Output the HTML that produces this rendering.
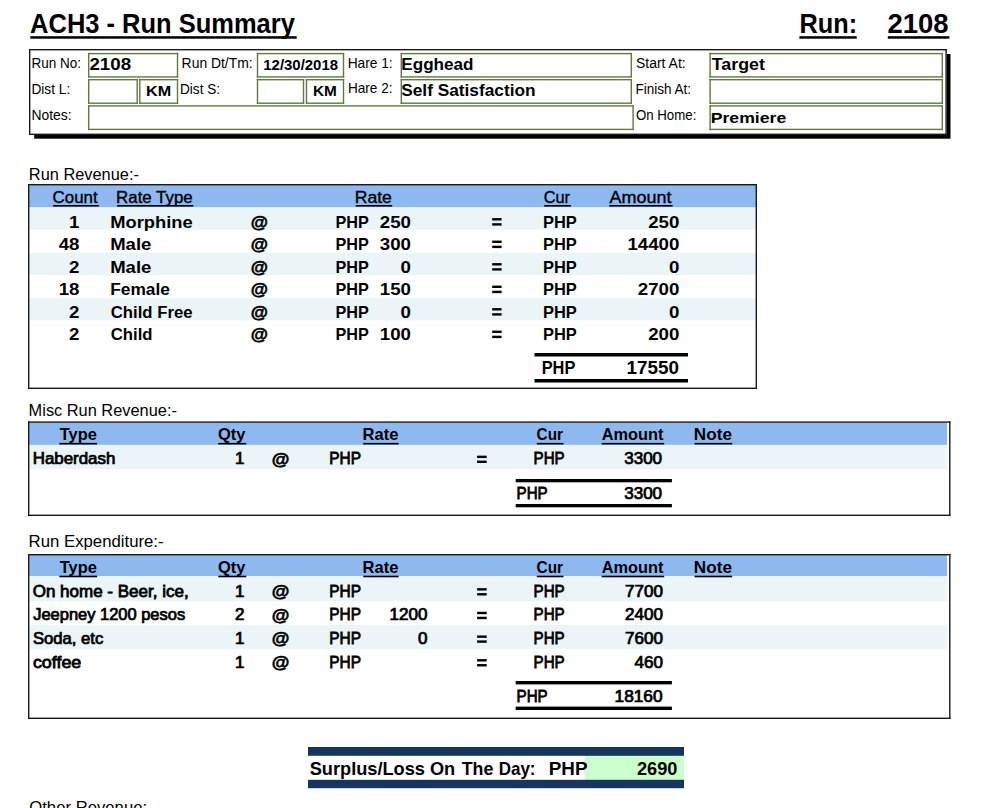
<!DOCTYPE html>
<html><head><meta charset="utf-8"><style>
html,body{margin:0;padding:0;background:#fff;}
svg{display:block;}
text{font-family:"Liberation Sans",sans-serif;white-space:pre;}
</style></head><body>
<svg width="994" height="808" viewBox="0 0 994 808">
<rect x="0" y="0" width="994" height="808" fill="#fff"/>
<rect x="30.3" y="36.2" width="266.4" height="2.5" fill="#000"/>
<rect x="799.4" y="36.2" width="57.3" height="2.5" fill="#000"/>
<rect x="887.8" y="36.2" width="61.6" height="2.5" fill="#000"/>
<rect x="34.2" y="54" width="916.3" height="84.7" fill="#000"/>
<rect x="29" y="49" width="917.8" height="86" fill="#fff"/>
<rect x="29" y="49" width="917.8" height="1.4" fill="#1a1a1a"/>
<rect x="29" y="133.6" width="917.8" height="1.4" fill="#1a1a1a"/>
<rect x="29" y="49" width="1.4" height="86" fill="#1a1a1a"/>
<rect x="945.4" y="49" width="1.4" height="86" fill="#1a1a1a"/>
<rect x="88" y="52.9" width="90.19999999999999" height="1.4" fill="#62793f"/>
<rect x="88" y="76.19999999999999" width="90.19999999999999" height="1.4" fill="#62793f"/>
<rect x="88" y="52.9" width="1.4" height="24.699999999999996" fill="#62793f"/>
<rect x="176.79999999999998" y="52.9" width="1.4" height="24.699999999999996" fill="#62793f"/>
<rect x="88" y="79" width="49.900000000000006" height="1.4" fill="#62793f"/>
<rect x="88" y="102.5" width="49.900000000000006" height="1.4" fill="#62793f"/>
<rect x="88" y="79" width="1.4" height="24.900000000000006" fill="#62793f"/>
<rect x="136.5" y="79" width="1.4" height="24.900000000000006" fill="#62793f"/>
<rect x="139.1" y="79" width="39.099999999999994" height="1.4" fill="#62793f"/>
<rect x="139.1" y="102.5" width="39.099999999999994" height="1.4" fill="#62793f"/>
<rect x="139.1" y="79" width="1.4" height="24.900000000000006" fill="#62793f"/>
<rect x="176.79999999999998" y="79" width="1.4" height="24.900000000000006" fill="#62793f"/>
<rect x="88" y="105.2" width="545.8" height="1.4" fill="#62793f"/>
<rect x="88" y="128.7" width="545.8" height="1.4" fill="#62793f"/>
<rect x="88" y="105.2" width="1.4" height="24.89999999999999" fill="#62793f"/>
<rect x="632.4" y="105.2" width="1.4" height="24.89999999999999" fill="#62793f"/>
<rect x="256.8" y="52.9" width="87.39999999999998" height="1.4" fill="#62793f"/>
<rect x="256.8" y="76.19999999999999" width="87.39999999999998" height="1.4" fill="#62793f"/>
<rect x="256.8" y="52.9" width="1.4" height="24.699999999999996" fill="#62793f"/>
<rect x="342.8" y="52.9" width="1.4" height="24.699999999999996" fill="#62793f"/>
<rect x="256.8" y="79" width="47.39999999999998" height="1.4" fill="#62793f"/>
<rect x="256.8" y="102.5" width="47.39999999999998" height="1.4" fill="#62793f"/>
<rect x="256.8" y="79" width="1.4" height="24.900000000000006" fill="#62793f"/>
<rect x="302.8" y="79" width="1.4" height="24.900000000000006" fill="#62793f"/>
<rect x="305.8" y="79" width="38.39999999999998" height="1.4" fill="#62793f"/>
<rect x="305.8" y="102.5" width="38.39999999999998" height="1.4" fill="#62793f"/>
<rect x="305.8" y="79" width="1.4" height="24.900000000000006" fill="#62793f"/>
<rect x="342.8" y="79" width="1.4" height="24.900000000000006" fill="#62793f"/>
<rect x="400.6" y="52.9" width="231.39999999999998" height="1.4" fill="#62793f"/>
<rect x="400.6" y="76.19999999999999" width="231.39999999999998" height="1.4" fill="#62793f"/>
<rect x="400.6" y="52.9" width="1.4" height="24.699999999999996" fill="#62793f"/>
<rect x="630.6" y="52.9" width="1.4" height="24.699999999999996" fill="#62793f"/>
<rect x="400.6" y="79" width="231.39999999999998" height="1.4" fill="#62793f"/>
<rect x="400.6" y="102.5" width="231.39999999999998" height="1.4" fill="#62793f"/>
<rect x="400.6" y="79" width="1.4" height="24.900000000000006" fill="#62793f"/>
<rect x="630.6" y="79" width="1.4" height="24.900000000000006" fill="#62793f"/>
<rect x="709.4" y="52.9" width="233.60000000000002" height="1.4" fill="#62793f"/>
<rect x="709.4" y="76.19999999999999" width="233.60000000000002" height="1.4" fill="#62793f"/>
<rect x="709.4" y="52.9" width="1.4" height="24.699999999999996" fill="#62793f"/>
<rect x="941.6" y="52.9" width="1.4" height="24.699999999999996" fill="#62793f"/>
<rect x="709.4" y="79" width="233.60000000000002" height="1.4" fill="#62793f"/>
<rect x="709.4" y="102.5" width="233.60000000000002" height="1.4" fill="#62793f"/>
<rect x="709.4" y="79" width="1.4" height="24.900000000000006" fill="#62793f"/>
<rect x="941.6" y="79" width="1.4" height="24.900000000000006" fill="#62793f"/>
<rect x="709.4" y="105.2" width="233.60000000000002" height="1.4" fill="#62793f"/>
<rect x="709.4" y="128.7" width="233.60000000000002" height="1.4" fill="#62793f"/>
<rect x="709.4" y="105.2" width="1.4" height="24.89999999999999" fill="#62793f"/>
<rect x="941.6" y="105.2" width="1.4" height="24.89999999999999" fill="#62793f"/>
<rect x="29" y="185" width="727" height="22.5" fill="#8db8f0"/>
<rect x="29" y="207.3" width="727" height="22.5" fill="#ebf5f8"/>
<rect x="29" y="252.6" width="727" height="22.5" fill="#ebf5f8"/>
<rect x="29" y="297.8" width="727" height="22.5" fill="#ebf5f8"/>
<rect x="28" y="184" width="729" height="1.4" fill="#1a1a1a"/>
<rect x="28" y="387.6" width="729" height="1.4" fill="#1a1a1a"/>
<rect x="28" y="184" width="1.4" height="205" fill="#1a1a1a"/>
<rect x="755.6" y="184" width="1.4" height="205" fill="#1a1a1a"/>
<rect x="53.1" y="205" width="45.699999999999996" height="1.6" fill="#000"/>
<rect x="117.10000000000001" y="205" width="76.2" height="1.6" fill="#000"/>
<rect x="355.8" y="205" width="36.39999999999996" height="1.6" fill="#000"/>
<rect x="544.2" y="205" width="26.8" height="1.6" fill="#000"/>
<rect x="609.3000000000001" y="205" width="63.3" height="1.6" fill="#000"/>
<rect x="492.2" y="218.1" width="9.4" height="2.4" fill="#000"/>
<rect x="492.2" y="223.2" width="9.4" height="2.4" fill="#000"/>
<rect x="492.2" y="240.6" width="9.4" height="2.4" fill="#000"/>
<rect x="492.2" y="245.7" width="9.4" height="2.4" fill="#000"/>
<rect x="492.2" y="263.1" width="9.4" height="2.4" fill="#000"/>
<rect x="492.2" y="268.20000000000005" width="9.4" height="2.4" fill="#000"/>
<rect x="492.2" y="285.6" width="9.4" height="2.4" fill="#000"/>
<rect x="492.2" y="290.70000000000005" width="9.4" height="2.4" fill="#000"/>
<rect x="492.2" y="308.1" width="9.4" height="2.4" fill="#000"/>
<rect x="492.2" y="313.20000000000005" width="9.4" height="2.4" fill="#000"/>
<rect x="492.2" y="330.6" width="9.4" height="2.4" fill="#000"/>
<rect x="492.2" y="335.70000000000005" width="9.4" height="2.4" fill="#000"/>
<rect x="534.5" y="353" width="153.5" height="3.5" fill="#000"/>
<rect x="534.5" y="379" width="153.5" height="3.5" fill="#000"/>
<rect x="29" y="422.4" width="918" height="22.5" fill="#8db8f0"/>
<rect x="29" y="444.9" width="918" height="24.1" fill="#ebf5f8"/>
<rect x="28" y="421.4" width="922.5" height="1.4" fill="#1a1a1a"/>
<rect x="28" y="514.6" width="922.5" height="1.4" fill="#1a1a1a"/>
<rect x="28" y="421.4" width="1.4" height="94.60000000000002" fill="#1a1a1a"/>
<rect x="949.1" y="421.4" width="1.4" height="94.60000000000002" fill="#1a1a1a"/>
<rect x="59.400000000000006" y="442.9" width="37.7" height="1.6" fill="#000"/>
<rect x="218.2" y="442.9" width="28.0" height="1.6" fill="#000"/>
<rect x="363.3" y="442.9" width="35.39999999999998" height="1.6" fill="#000"/>
<rect x="536.8000000000001" y="442.9" width="26.699999999999932" height="1.6" fill="#000"/>
<rect x="601.7" y="442.9" width="62.5" height="1.6" fill="#000"/>
<rect x="694.6" y="442.9" width="37.60000000000002" height="1.6" fill="#000"/>
<rect x="477.1" y="455.65" width="9.6" height="2.4" fill="#000"/>
<rect x="477.1" y="460.59999999999997" width="9.6" height="2.4" fill="#000"/>
<rect x="515.7" y="479" width="156.2" height="3.3" fill="#000"/>
<rect x="515.7" y="504" width="156.2" height="3.3" fill="#000"/>
<rect x="29" y="555" width="918" height="21.299999999999955" fill="#8db8f0"/>
<rect x="29" y="576.3" width="918" height="25" fill="#ebf5f8"/>
<rect x="29" y="624.8" width="918" height="24.1" fill="#ebf5f8"/>
<rect x="28" y="554" width="922.5" height="1.4" fill="#1a1a1a"/>
<rect x="28" y="717.6" width="922.5" height="1.4" fill="#1a1a1a"/>
<rect x="28" y="554" width="1.4" height="165" fill="#1a1a1a"/>
<rect x="949.1" y="554" width="1.4" height="165" fill="#1a1a1a"/>
<rect x="59.400000000000006" y="575.6999999999999" width="37.7" height="1.6" fill="#000"/>
<rect x="218.2" y="575.6999999999999" width="28.0" height="1.6" fill="#000"/>
<rect x="363.3" y="575.6999999999999" width="35.39999999999998" height="1.6" fill="#000"/>
<rect x="536.8000000000001" y="575.6999999999999" width="26.699999999999932" height="1.6" fill="#000"/>
<rect x="601.7" y="575.6999999999999" width="62.5" height="1.6" fill="#000"/>
<rect x="694.6" y="575.6999999999999" width="37.60000000000002" height="1.6" fill="#000"/>
<rect x="477.1" y="588.1500000000001" width="9.6" height="2.4" fill="#000"/>
<rect x="477.1" y="593.1" width="9.6" height="2.4" fill="#000"/>
<rect x="477.1" y="611.8000000000001" width="9.6" height="2.4" fill="#000"/>
<rect x="477.1" y="616.75" width="9.6" height="2.4" fill="#000"/>
<rect x="477.1" y="635.45" width="9.6" height="2.4" fill="#000"/>
<rect x="477.1" y="640.4" width="9.6" height="2.4" fill="#000"/>
<rect x="477.1" y="659.1000000000001" width="9.6" height="2.4" fill="#000"/>
<rect x="477.1" y="664.0500000000001" width="9.6" height="2.4" fill="#000"/>
<rect x="515.7" y="681" width="156.2" height="3.4" fill="#000"/>
<rect x="515.7" y="706.6" width="156.2" height="3.4" fill="#000"/>
<rect x="584.6" y="755" width="99.4" height="25" fill="#ccffcc"/>
<rect x="308" y="747" width="376" height="8.8" fill="#17365d"/>
<rect x="308" y="779.8" width="376" height="8.4" fill="#17365d"/>
<text transform="translate(30.10,32.70) scale(0.9330,1)" font-size="27.31" font-weight="bold" fill="#000">ACH3 - Run Summary</text>
<text transform="translate(799.42,32.60) scale(0.9476,1)" font-size="26.74" font-weight="bold" fill="#000">Run:</text>
<text transform="translate(887.44,32.60) scale(1.0297,1)" font-size="26.74" font-weight="bold" fill="#000">2108</text>
<text transform="translate(31.44,67.90) scale(0.9428,1)" font-size="14.36" font-weight="normal" fill="#000">Run No:</text>
<text transform="translate(31.43,93.70) scale(0.9533,1)" font-size="14.36" font-weight="normal" fill="#000">Dist L:</text>
<text transform="translate(31.41,119.60) scale(0.9669,1)" font-size="14.36" font-weight="normal" fill="#000">Notes:</text>
<text transform="translate(181.61,67.60) scale(0.9689,1)" font-size="14.36" font-weight="normal" fill="#000">Run Dt/Tm:</text>
<text transform="translate(179.93,93.80) scale(0.9503,1)" font-size="14.36" font-weight="normal" fill="#000">Dist S:</text>
<text transform="translate(347.63,67.80) scale(0.9578,1)" font-size="14.36" font-weight="normal" fill="#000">Hare 1:</text>
<text transform="translate(347.94,93.40) scale(0.9466,1)" font-size="14.36" font-weight="normal" fill="#000">Hare 2:</text>
<text transform="translate(636.06,67.90) scale(0.9712,1)" font-size="14.36" font-weight="normal" fill="#000">Start At:</text>
<text transform="translate(635.44,93.80) scale(0.9434,1)" font-size="14.36" font-weight="normal" fill="#000">Finish At:</text>
<text transform="translate(635.88,120.40) scale(0.9246,1)" font-size="14.36" font-weight="normal" fill="#000">On Home:</text>
<text transform="translate(89.41,70.20) scale(1.1997,1)" font-size="15.64" font-weight="bold" fill="#000">2108</text>
<text transform="translate(145.99,96.30) scale(1.0431,1)" font-size="15.50" font-weight="bold" fill="#000">KM</text>
<text transform="translate(263.27,69.80) scale(0.9915,1)" font-size="15.08" font-weight="bold" fill="#000">12/30/2018</text>
<text transform="translate(313.04,96.30) scale(0.9894,1)" font-size="15.50" font-weight="bold" fill="#000">KM</text>
<text transform="translate(401.33,70.20) scale(1.0825,1)" font-size="15.79" font-weight="bold" fill="#000">Egghead</text>
<text transform="translate(401.23,96.30) scale(1.0563,1)" font-size="16.36" font-weight="bold" fill="#000">Self Satisfaction</text>
<text transform="translate(711.80,70.20) scale(1.1298,1)" font-size="15.79" font-weight="bold" fill="#000">Target</text>
<text transform="translate(710.70,122.70) scale(1.1399,1)" font-size="15.50" font-weight="bold" fill="#000">Premiere</text>
<text transform="translate(28.82,179.80) scale(1.0366,1)" font-size="15.79" font-weight="normal" fill="#000">Run Revenue:-</text>
<text transform="translate(28.62,416.30) scale(1.0368,1)" font-size="15.79" font-weight="normal" fill="#000">Misc Run Revenue:-</text>
<text transform="translate(28.59,547.40) scale(1.0619,1)" font-size="15.79" font-weight="normal" fill="#000">Run Expenditure:-</text>
<text transform="translate(29.22,813.00) scale(1.0578,1)" font-size="15.79" font-weight="normal" fill="#000">Other Revenue:</text>
<text transform="translate(52.61,202.80) scale(1.0525,1)" font-size="16.07" font-weight="normal" fill="#000" stroke="#000" stroke-width="0.35">Count</text>
<text transform="translate(116.08,202.80) scale(1.0498,1)" font-size="16.07" font-weight="normal" fill="#000" stroke="#000" stroke-width="0.35">Rate Type</text>
<text transform="translate(354.72,202.80) scale(1.0955,1)" font-size="16.07" font-weight="normal" fill="#000" stroke="#000" stroke-width="0.35">Rate</text>
<text transform="translate(543.73,202.80) scale(1.0174,1)" font-size="16.07" font-weight="normal" fill="#000" stroke="#000" stroke-width="0.35">Cur</text>
<text transform="translate(609.60,202.80) scale(1.1183,1)" font-size="16.07" font-weight="normal" fill="#000" stroke="#000" stroke-width="0.35">Amount</text>
<text transform="translate(69.08,227.60) scale(1.1318,1)" font-size="16.50" font-weight="bold" fill="#000">1</text>
<text transform="translate(110.15,227.60) scale(1.1128,1)" font-size="16.50" font-weight="bold" fill="#000">Morphine</text>
<text transform="translate(250.78,227.90) scale(1.0668,1)" font-size="16.50" font-weight="bold" fill="#000" stroke="#000" stroke-width="0.6">@</text>
<text transform="translate(335.39,227.60) scale(0.9829,1)" font-size="16.50" font-weight="bold" fill="#000">PHP</text>
<text transform="translate(379.80,227.60) scale(1.1318,1)" font-size="16.50" font-weight="bold" fill="#000">250</text>
<text transform="translate(542.97,227.60) scale(0.9983,1)" font-size="16.50" font-weight="bold" fill="#000">PHP</text>
<text transform="translate(648.20,227.60) scale(1.1318,1)" font-size="16.50" font-weight="bold" fill="#000">250</text>
<text transform="translate(58.70,250.10) scale(1.1318,1)" font-size="16.50" font-weight="bold" fill="#000">48</text>
<text transform="translate(110.14,250.10) scale(1.1239,1)" font-size="16.50" font-weight="bold" fill="#000">Male</text>
<text transform="translate(250.78,250.40) scale(1.0668,1)" font-size="16.50" font-weight="bold" fill="#000" stroke="#000" stroke-width="0.6">@</text>
<text transform="translate(335.39,250.10) scale(0.9829,1)" font-size="16.50" font-weight="bold" fill="#000">PHP</text>
<text transform="translate(379.80,250.10) scale(1.1318,1)" font-size="16.50" font-weight="bold" fill="#000">300</text>
<text transform="translate(542.97,250.10) scale(0.9983,1)" font-size="16.50" font-weight="bold" fill="#000">PHP</text>
<text transform="translate(627.43,250.10) scale(1.1318,1)" font-size="16.50" font-weight="bold" fill="#000">14400</text>
<text transform="translate(69.08,272.60) scale(1.1318,1)" font-size="16.50" font-weight="bold" fill="#000">2</text>
<text transform="translate(110.14,272.60) scale(1.1239,1)" font-size="16.50" font-weight="bold" fill="#000">Male</text>
<text transform="translate(250.78,272.90) scale(1.0668,1)" font-size="16.50" font-weight="bold" fill="#000" stroke="#000" stroke-width="0.6">@</text>
<text transform="translate(335.39,272.60) scale(0.9829,1)" font-size="16.50" font-weight="bold" fill="#000">PHP</text>
<text transform="translate(400.57,272.60) scale(1.1318,1)" font-size="16.50" font-weight="bold" fill="#000">0</text>
<text transform="translate(542.97,272.60) scale(0.9983,1)" font-size="16.50" font-weight="bold" fill="#000">PHP</text>
<text transform="translate(668.97,272.60) scale(1.1318,1)" font-size="16.50" font-weight="bold" fill="#000">0</text>
<text transform="translate(58.70,295.10) scale(1.1318,1)" font-size="16.50" font-weight="bold" fill="#000">18</text>
<text transform="translate(110.22,295.10) scale(1.0485,1)" font-size="16.50" font-weight="bold" fill="#000">Female</text>
<text transform="translate(250.78,295.40) scale(1.0668,1)" font-size="16.50" font-weight="bold" fill="#000" stroke="#000" stroke-width="0.6">@</text>
<text transform="translate(335.39,295.10) scale(0.9829,1)" font-size="16.50" font-weight="bold" fill="#000">PHP</text>
<text transform="translate(379.80,295.10) scale(1.1318,1)" font-size="16.50" font-weight="bold" fill="#000">150</text>
<text transform="translate(542.97,295.10) scale(0.9983,1)" font-size="16.50" font-weight="bold" fill="#000">PHP</text>
<text transform="translate(637.82,295.10) scale(1.1318,1)" font-size="16.50" font-weight="bold" fill="#000">2700</text>
<text transform="translate(69.08,317.60) scale(1.1318,1)" font-size="16.50" font-weight="bold" fill="#000">2</text>
<text transform="translate(110.78,317.60) scale(1.0133,1)" font-size="16.50" font-weight="bold" fill="#000">Child Free</text>
<text transform="translate(250.78,317.90) scale(1.0668,1)" font-size="16.50" font-weight="bold" fill="#000" stroke="#000" stroke-width="0.6">@</text>
<text transform="translate(335.39,317.60) scale(0.9829,1)" font-size="16.50" font-weight="bold" fill="#000">PHP</text>
<text transform="translate(400.57,317.60) scale(1.1318,1)" font-size="16.50" font-weight="bold" fill="#000">0</text>
<text transform="translate(542.97,317.60) scale(0.9983,1)" font-size="16.50" font-weight="bold" fill="#000">PHP</text>
<text transform="translate(668.97,317.60) scale(1.1318,1)" font-size="16.50" font-weight="bold" fill="#000">0</text>
<text transform="translate(69.08,340.10) scale(1.1318,1)" font-size="16.50" font-weight="bold" fill="#000">2</text>
<text transform="translate(110.78,340.10) scale(1.0135,1)" font-size="16.50" font-weight="bold" fill="#000">Child</text>
<text transform="translate(250.78,340.40) scale(1.0668,1)" font-size="16.50" font-weight="bold" fill="#000" stroke="#000" stroke-width="0.6">@</text>
<text transform="translate(335.39,340.10) scale(0.9829,1)" font-size="16.50" font-weight="bold" fill="#000">PHP</text>
<text transform="translate(379.80,340.10) scale(1.1318,1)" font-size="16.50" font-weight="bold" fill="#000">100</text>
<text transform="translate(542.97,340.10) scale(0.9983,1)" font-size="16.50" font-weight="bold" fill="#000">PHP</text>
<text transform="translate(648.20,340.10) scale(1.1318,1)" font-size="16.50" font-weight="bold" fill="#000">200</text>
<text transform="translate(541.68,373.80) scale(0.9207,1)" font-size="17.78" font-weight="bold" fill="#000">PHP</text>
<text transform="translate(626.52,373.80) scale(1.0608,1)" font-size="17.78" font-weight="bold" fill="#000">17550</text>
<text transform="translate(59.70,440.00) scale(1.0218,1)" font-size="16.07" font-weight="bold" fill="#000">Type</text>
<text transform="translate(217.99,440.00) scale(1.0231,1)" font-size="16.07" font-weight="bold" fill="#000">Qty</text>
<text transform="translate(362.57,440.00) scale(1.0290,1)" font-size="16.07" font-weight="bold" fill="#000">Rate</text>
<text transform="translate(536.62,440.00) scale(0.9537,1)" font-size="16.07" font-weight="bold" fill="#000">Cur</text>
<text transform="translate(601.74,440.00) scale(1.0187,1)" font-size="16.07" font-weight="bold" fill="#000">Amount</text>
<text transform="translate(693.83,440.00) scale(1.0668,1)" font-size="16.07" font-weight="bold" fill="#000">Note</text>
<text transform="translate(32.68,464.20) scale(1.0815,1)" font-size="15.64" font-weight="normal" fill="#000" stroke="#000" stroke-width="0.75">Haberdash</text>
<text transform="translate(235.01,464.20) scale(1.0897,1)" font-size="15.64" font-weight="normal" fill="#000" stroke="#000" stroke-width="0.75">1</text>
<text transform="translate(271.75,464.50) scale(1.1236,1)" font-size="16.07" font-weight="bold" fill="#000" stroke="#000" stroke-width="0.6">@</text>
<text transform="translate(329.29,464.20) scale(0.9872,1)" font-size="15.64" font-weight="normal" fill="#000" stroke="#000" stroke-width="0.75">PHP</text>
<text transform="translate(533.62,464.20) scale(0.9674,1)" font-size="15.64" font-weight="normal" fill="#000" stroke="#000" stroke-width="0.75">PHP</text>
<text transform="translate(624.20,464.20) scale(1.0897,1)" font-size="15.64" font-weight="normal" fill="#000" stroke="#000" stroke-width="0.75">3300</text>
<text transform="translate(516.62,498.70) scale(0.9674,1)" font-size="15.64" font-weight="normal" fill="#000" stroke="#000" stroke-width="0.75">PHP</text>
<text transform="translate(624.20,498.70) scale(1.0897,1)" font-size="15.64" font-weight="normal" fill="#000" stroke="#000" stroke-width="0.75">3300</text>
<text transform="translate(59.70,572.80) scale(1.0218,1)" font-size="16.07" font-weight="bold" fill="#000">Type</text>
<text transform="translate(217.99,572.80) scale(1.0231,1)" font-size="16.07" font-weight="bold" fill="#000">Qty</text>
<text transform="translate(362.57,572.80) scale(1.0290,1)" font-size="16.07" font-weight="bold" fill="#000">Rate</text>
<text transform="translate(536.62,572.80) scale(0.9537,1)" font-size="16.07" font-weight="bold" fill="#000">Cur</text>
<text transform="translate(601.74,572.80) scale(1.0187,1)" font-size="16.07" font-weight="bold" fill="#000">Amount</text>
<text transform="translate(693.83,572.80) scale(1.0668,1)" font-size="16.07" font-weight="bold" fill="#000">Note</text>
<text transform="translate(32.70,596.70) scale(1.0885,1)" font-size="15.64" font-weight="normal" fill="#000" stroke="#000" stroke-width="0.75">On home - Beer, ice,</text>
<text transform="translate(235.01,596.70) scale(1.0897,1)" font-size="15.64" font-weight="normal" fill="#000" stroke="#000" stroke-width="0.75">1</text>
<text transform="translate(271.75,597.00) scale(1.1236,1)" font-size="16.07" font-weight="bold" fill="#000" stroke="#000" stroke-width="0.6">@</text>
<text transform="translate(329.29,596.70) scale(0.9872,1)" font-size="15.64" font-weight="normal" fill="#000" stroke="#000" stroke-width="0.75">PHP</text>
<text transform="translate(533.62,596.70) scale(0.9674,1)" font-size="15.64" font-weight="normal" fill="#000" stroke="#000" stroke-width="0.75">PHP</text>
<text transform="translate(625.00,596.70) scale(1.0897,1)" font-size="15.64" font-weight="normal" fill="#000" stroke="#000" stroke-width="0.75">7700</text>
<text transform="translate(33.24,620.35) scale(1.0532,1)" font-size="15.64" font-weight="normal" fill="#000" stroke="#000" stroke-width="0.75">Jeepney 1200 pesos</text>
<text transform="translate(235.01,620.35) scale(1.0897,1)" font-size="15.64" font-weight="normal" fill="#000" stroke="#000" stroke-width="0.75">2</text>
<text transform="translate(271.75,620.65) scale(1.1236,1)" font-size="16.07" font-weight="bold" fill="#000" stroke="#000" stroke-width="0.6">@</text>
<text transform="translate(329.29,620.35) scale(0.9872,1)" font-size="15.64" font-weight="normal" fill="#000" stroke="#000" stroke-width="0.75">PHP</text>
<text transform="translate(389.50,620.35) scale(1.0897,1)" font-size="15.64" font-weight="normal" fill="#000" stroke="#000" stroke-width="0.75">1200</text>
<text transform="translate(533.62,620.35) scale(0.9674,1)" font-size="15.64" font-weight="normal" fill="#000" stroke="#000" stroke-width="0.75">PHP</text>
<text transform="translate(625.00,620.35) scale(1.0897,1)" font-size="15.64" font-weight="normal" fill="#000" stroke="#000" stroke-width="0.75">2400</text>
<text transform="translate(32.98,644.00) scale(1.0648,1)" font-size="15.64" font-weight="normal" fill="#000" stroke="#000" stroke-width="0.75">Soda, etc</text>
<text transform="translate(235.01,644.00) scale(1.0897,1)" font-size="15.64" font-weight="normal" fill="#000" stroke="#000" stroke-width="0.75">1</text>
<text transform="translate(271.75,644.30) scale(1.1236,1)" font-size="16.07" font-weight="bold" fill="#000" stroke="#000" stroke-width="0.6">@</text>
<text transform="translate(329.29,644.00) scale(0.9872,1)" font-size="15.64" font-weight="normal" fill="#000" stroke="#000" stroke-width="0.75">PHP</text>
<text transform="translate(417.94,644.00) scale(1.0897,1)" font-size="15.64" font-weight="normal" fill="#000" stroke="#000" stroke-width="0.75">0</text>
<text transform="translate(533.62,644.00) scale(0.9674,1)" font-size="15.64" font-weight="normal" fill="#000" stroke="#000" stroke-width="0.75">PHP</text>
<text transform="translate(625.00,644.00) scale(1.0897,1)" font-size="15.64" font-weight="normal" fill="#000" stroke="#000" stroke-width="0.75">7600</text>
<text transform="translate(32.94,667.65) scale(1.1429,1)" font-size="15.64" font-weight="normal" fill="#000" stroke="#000" stroke-width="0.75">coffee</text>
<text transform="translate(235.01,667.65) scale(1.0897,1)" font-size="15.64" font-weight="normal" fill="#000" stroke="#000" stroke-width="0.75">1</text>
<text transform="translate(271.75,667.95) scale(1.1236,1)" font-size="16.07" font-weight="bold" fill="#000" stroke="#000" stroke-width="0.6">@</text>
<text transform="translate(329.29,667.65) scale(0.9872,1)" font-size="15.64" font-weight="normal" fill="#000" stroke="#000" stroke-width="0.75">PHP</text>
<text transform="translate(533.62,667.65) scale(0.9674,1)" font-size="15.64" font-weight="normal" fill="#000" stroke="#000" stroke-width="0.75">PHP</text>
<text transform="translate(634.48,667.65) scale(1.0897,1)" font-size="15.64" font-weight="normal" fill="#000" stroke="#000" stroke-width="0.75">460</text>
<text transform="translate(516.62,702.00) scale(0.9674,1)" font-size="15.64" font-weight="normal" fill="#000" stroke="#000" stroke-width="0.75">PHP</text>
<text transform="translate(614.52,702.00) scale(1.1059,1)" font-size="15.64" font-weight="normal" fill="#000" stroke="#000" stroke-width="0.75">18160</text>
<text transform="translate(309.72,774.90) scale(0.9994,1)" font-size="18.20" font-weight="bold" fill="#000">Surplus/Loss On</text>
<text transform="translate(461.70,774.90) scale(0.9808,1)" font-size="18.20" font-weight="bold" fill="#000">The</text>
<text transform="translate(498.64,774.90) scale(0.9346,1)" font-size="18.20" font-weight="bold" fill="#000">Day:</text>
<text transform="translate(548.72,774.90) scale(1.0359,1)" font-size="18.20" font-weight="bold" fill="#000">PHP</text>
<text transform="translate(636.93,774.90) scale(1.0002,1)" font-size="18.20" font-weight="bold" fill="#000">2690</text>
</svg>
</body></html>
